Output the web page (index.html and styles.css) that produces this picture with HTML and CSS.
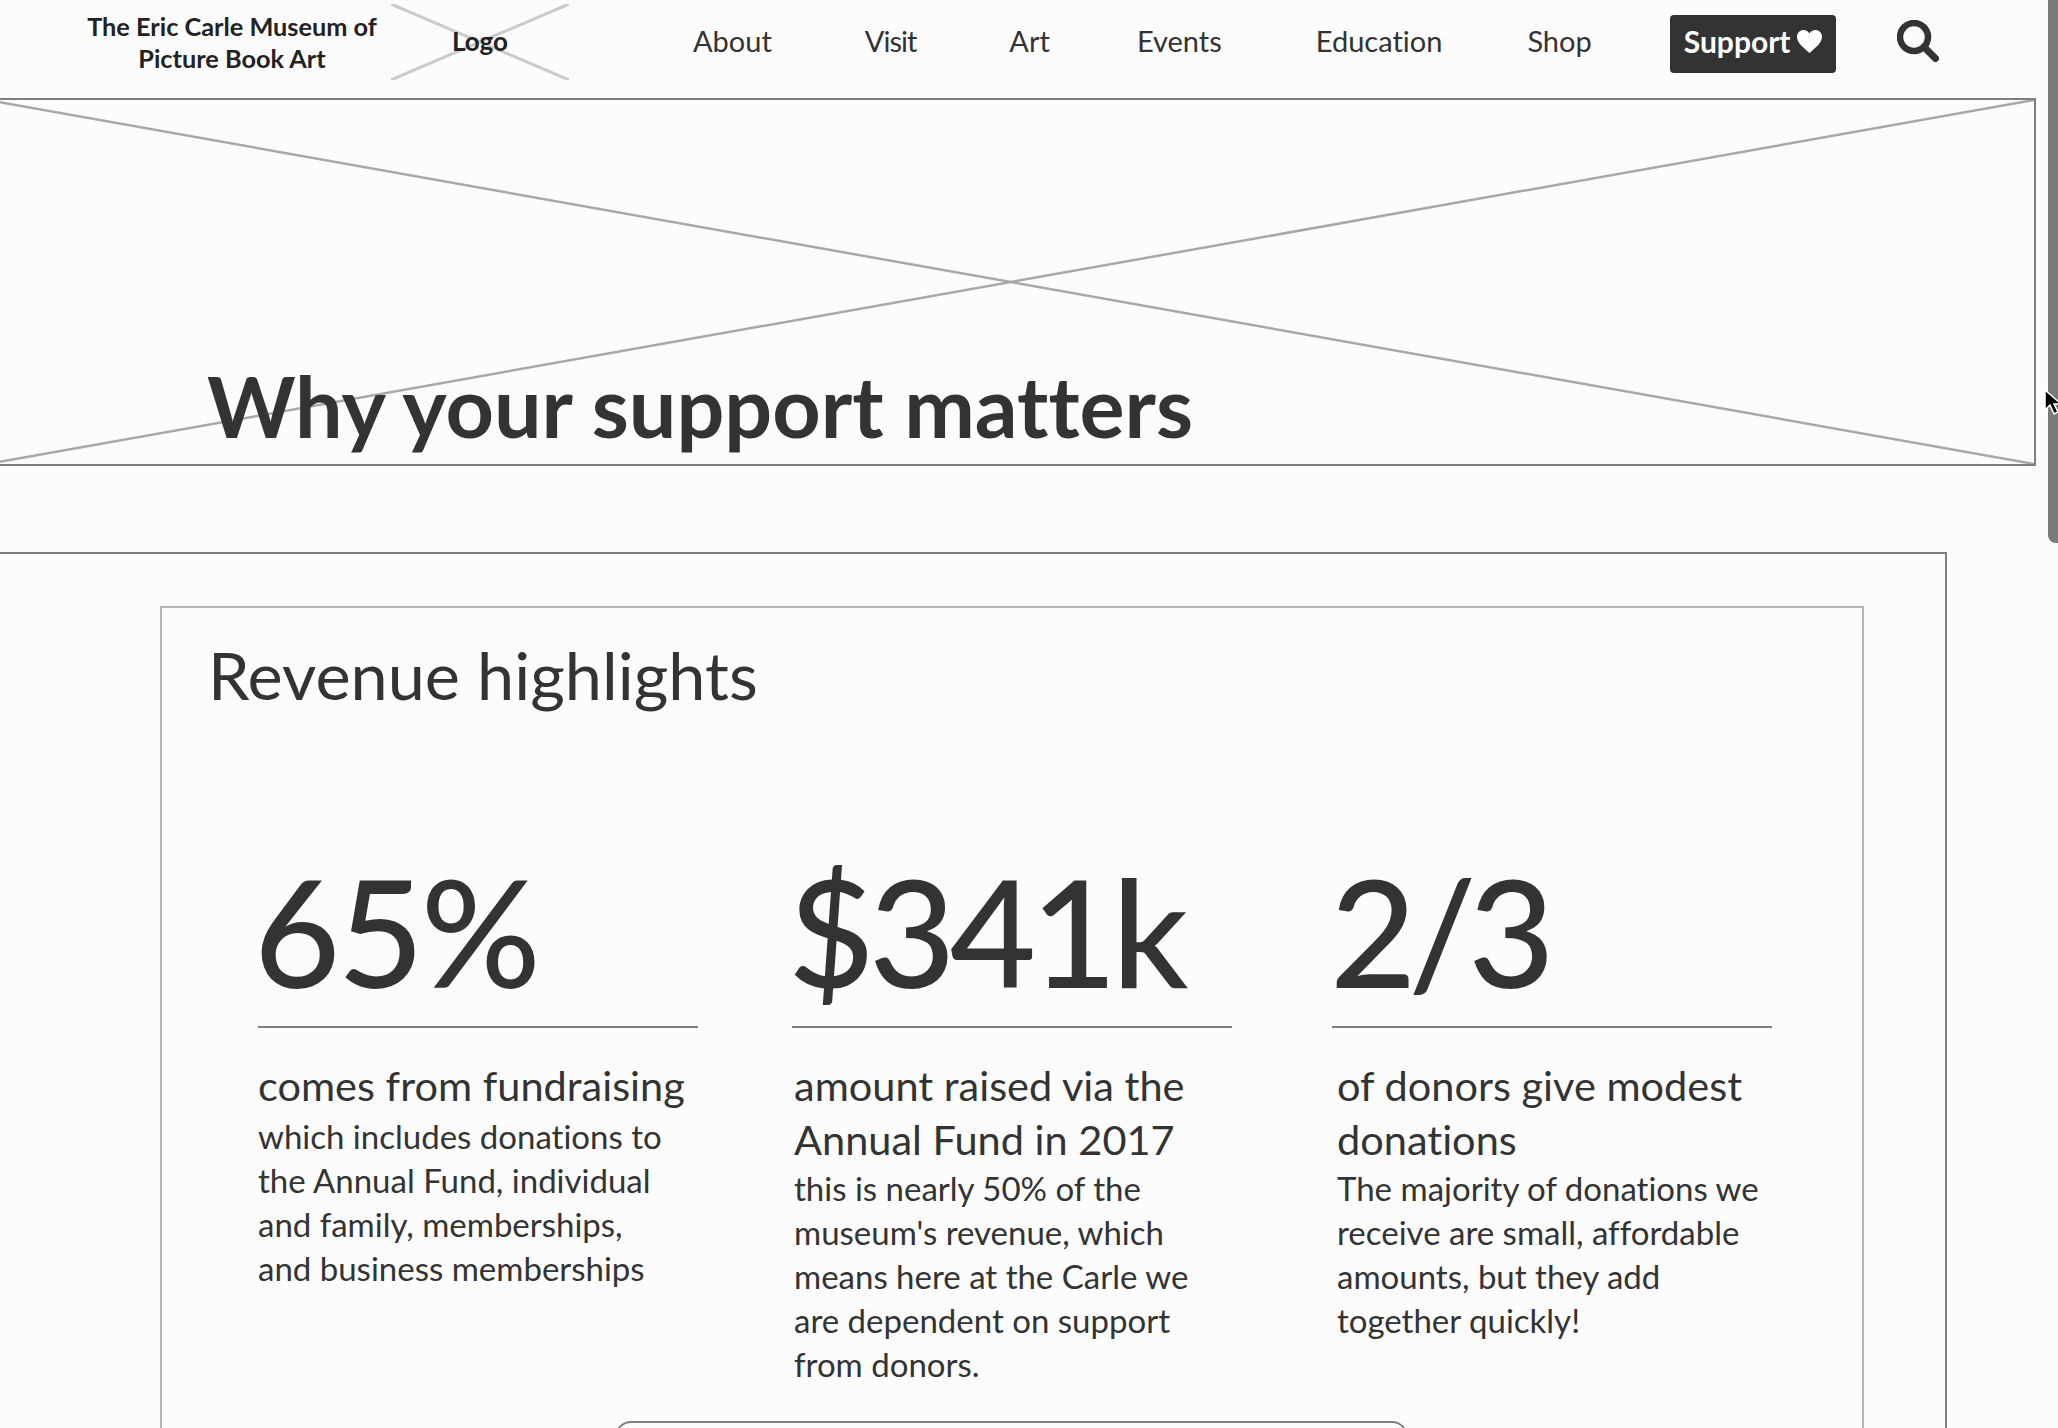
FILE: index.html
```html
<!DOCTYPE html>
<html lang="en">
<head>
  <meta charset="UTF-8" />
  <title>Why your support matters</title>
  <link rel="stylesheet" href="styles.css">
</head>
<body>
  <header class="site-header">
    <div class="brand">The Eric Carle Museum of<br>Picture Book Art</div>
    <div class="logo">
      <svg class="cross cross-light" viewBox="0 0 100 100" preserveAspectRatio="none">
        <line x1="0" y1="0" x2="100" y2="100" vector-effect="non-scaling-stroke" />
        <line x1="100" y1="0" x2="0" y2="100" vector-effect="non-scaling-stroke" />
      </svg>
      <span class="logo-text">Logo</span>
    </div>
    <nav class="nav">
      <a class="nav-link nav-about">About</a>
      <a class="nav-link nav-visit">Visit</a>
      <a class="nav-link nav-art">Art</a>
      <a class="nav-link nav-events">Events</a>
      <a class="nav-link nav-education">Education</a>
      <a class="nav-link nav-shop">Shop</a>
      <a class="support">Support
        <svg class="heart" viewBox="0 0 24 22"><path d="M12 22C5 16 0 12 0 6.500C0 2.800 2.800 0 6.300 0C8.700 0 10.800 1.200 12 3.200C13.200 1.200 15.300 0 17.700 0C21.200 0 24 2.800 24 6.500C24 12 19 16 12 22Z" /></svg>
      </a>
      <svg class="search" viewBox="0 0 42 42"><circle cx="17" cy="17" r="14" /><line x1="27" y1="27" x2="38.500" y2="38.500" /></svg>
    </nav>
  </header>

  <section class="hero">
    <svg class="cross cross-dark" viewBox="0 0 100 100" preserveAspectRatio="none">
      <line x1="0" y1="0" x2="100" y2="100" vector-effect="non-scaling-stroke" />
      <line x1="100" y1="0" x2="0" y2="100" vector-effect="non-scaling-stroke" />
    </svg>
    <h1 class="hero-title">Why your support matters</h1>
  </section>

  <main class="panel">
    <div class="box">
      <h2 class="box-title">Revenue highlights</h2>
      <div class="stats">
        <div class="stat stat-a">
          <div class="stat-num">65%</div>
          <div class="stat-body">
            <h3>comes from fundraising</h3>
            <p>which includes donations to<br>the Annual Fund, individual<br>and family, memberships,<br>and business memberships</p>
          </div>
        </div>
        <div class="stat stat-b">
          <div class="stat-num">$341k</div>
          <div class="stat-body">
            <h3>amount raised via the<br>Annual Fund in 2017</h3>
            <p>this is nearly 50% of the<br>museum's revenue, which<br>means here at the Carle we<br>are dependent on support<br>from donors.</p>
          </div>
        </div>
        <div class="stat stat-c">
          <div class="stat-num">2/3</div>
          <div class="stat-body">
            <h3>of donors give modest<br>donations</h3>
            <p>The majority of donations we<br>receive are small, affordable<br>amounts, but they add<br>together quickly!</p>
          </div>
        </div>
      </div>
      <div class="more"></div>
    </div>
  </main>

  <div class="scrollbar"></div>
  <svg class="cursor" viewBox="0 0 16 26"><path d="M1 1V21L6 16L10 25L14 23L10 15H17Z" /></svg>
</body>
</html>
```

FILE: styles.css
```css
/* Wireframe page */
html, body {
  height: 100%;
  overflow: hidden;
}
body {
  margin: 0;
  width: 2058px;
  height: 1428px;
  position: relative;
  background: #fcfcfc;
  color: #333;
  font-family: Lato, "Open Sans", sans-serif;
  font-variant-ligatures: none;
}

/* Header */
.site-header {
  display: flex;
  align-items: center;
  height: 98px;
  padding: 0 0 14px 87px;
  box-sizing: border-box;
}
.brand {
  width: 290px;
  text-align: center;
  font-size: 25.300px;
  font-weight: 700;
  line-height: 32px;
  color: #222;
}
.logo {
  position: relative;
  width: 178px;
  height: 76px;
  margin-left: 14px;
  display: flex;
  align-items: center;
  justify-content: center;
  font-size: 26px;
  font-weight: 700;
  color: #222;
}
.logo-text {
  position: relative;
  padding-bottom: 3px;
}
.cross {
  position: absolute;
  top: 0;
  left: 0;
  width: 100%;
  height: 100%;
}
.cross line { stroke-width: 2px; }
.cross-light line { stroke: #ccc; stroke-width: 3px; }
.cross-dark {
  left: -13px;
  width: calc(100% + 13px);
}
.cross-dark line { stroke: #a8a8a8; stroke-width: 2.500px; }
.nav {
  display: flex;
  align-items: center;
  margin-left: 124px;
  font-size: 29px;
  color: #333;
}
.nav-link { padding-bottom: 3px; }
.nav-visit {
  margin-left: 93px;
  letter-spacing: -1px;
}
.nav-art { margin-left: 93px; }
.nav-events { margin-left: 87px; }
.nav-education { margin-left: 94px; }
.nav-shop { margin-left: 85px; }
.support {
  display: flex;
  align-items: center;
  gap: 6px;
  height: 58px;
  width: 166px;
  margin: 3px 0 0 78px;
  padding: 0 0 5px 14px;
  box-sizing: border-box;
  background: #333;
  color: #fff;
  font-size: 30px;
  font-weight: 700;
  border-radius: 4px;
}
.heart {
  width: 25px;
  height: 23px;
  fill: #fff;
}
.search {
  width: 42px;
  height: 42px;
  margin-left: 61px;
  margin-top: -3px;
  fill: none;
  stroke: #333;
}
.search circle { stroke-width: 6.500px; }
.search line { stroke-width: 7px; stroke-linecap: round; }

/* Hero */
.hero {
  position: relative;
  width: 2036px;
  height: 368px;
  box-sizing: border-box;
  border: 2px solid #7f7f7f;
  border-left: 0;
  display: flex;
  align-items: flex-end;
}
.hero-title {
  position: relative;
  margin: 0 0 10px 207px;
  font-size: 84.400px;
  line-height: 96px;
  font-weight: 700;
  color: #333;
}

/* Main panel */
.panel {
  margin-top: 86px;
  width: 1947px;
  height: 876px;
  box-sizing: border-box;
  border-top: 2px solid #7f7f7f;
  border-right: 2px solid #7f7f7f;
  padding: 52px 81px 0 160px;
  overflow: hidden;
}
.box {
  position: relative;
  height: 900px;
  box-sizing: border-box;
  border: 2px solid #b5b5b5;
}
.box-title {
  margin: 27px 0 0 46px;
  font-size: 66.600px;
  line-height: 78px;
  font-weight: 400;
}
.stats {
  display: flex;
  margin-top: 140px;
  padding-left: 96px;
}
.stat { width: 440px; }
.stat-b { margin-left: 94px; }
.stat-c { margin-left: 100px; }
.stat-num {
  height: 173px;
  font-size: 149px;
  line-height: 156px;
  font-weight: 500;
  letter-spacing: -3px;
  text-indent: -4px;
  border-bottom: 2px solid #7f7f7f;
}
.stat-b .stat-num { letter-spacing: -5.500px; }
.stat-c .stat-num {
  letter-spacing: -8px;
  text-indent: -2px;
}
.stat-body { padding-top: 30px; }
.stat-b .stat-body { padding-left: 2px; }
.stat-c .stat-body { padding-left: 5px; }
.stat-body h3 {
  margin: 0;
  font-size: 41.500px;
  line-height: 54px;
  font-weight: 400;
}
.stat-body p {
  margin: 0;
  font-size: 33px;
  line-height: 44px;
}
.stat-a p { margin-top: 2px; }
.more {
  position: absolute;
  top: 813px;
  left: 453px;
  width: 793px;
  height: 60px;
  box-sizing: border-box;
  border: 2px solid #7f7f7f;
  border-radius: 16px;
}

/* Scrollbar and pointer */
.scrollbar {
  position: absolute;
  top: 0;
  right: 0;
  width: 10px;
  height: 543px;
  background: #7a7a7a;
  border-radius: 0 0 0 8px;
}
.cursor {
  position: absolute;
  top: 389px;
  left: 2044px;
  width: 16px;
  height: 26px;
  fill: #000;
  stroke: #fff;
  stroke-width: 1.500;
}
```
